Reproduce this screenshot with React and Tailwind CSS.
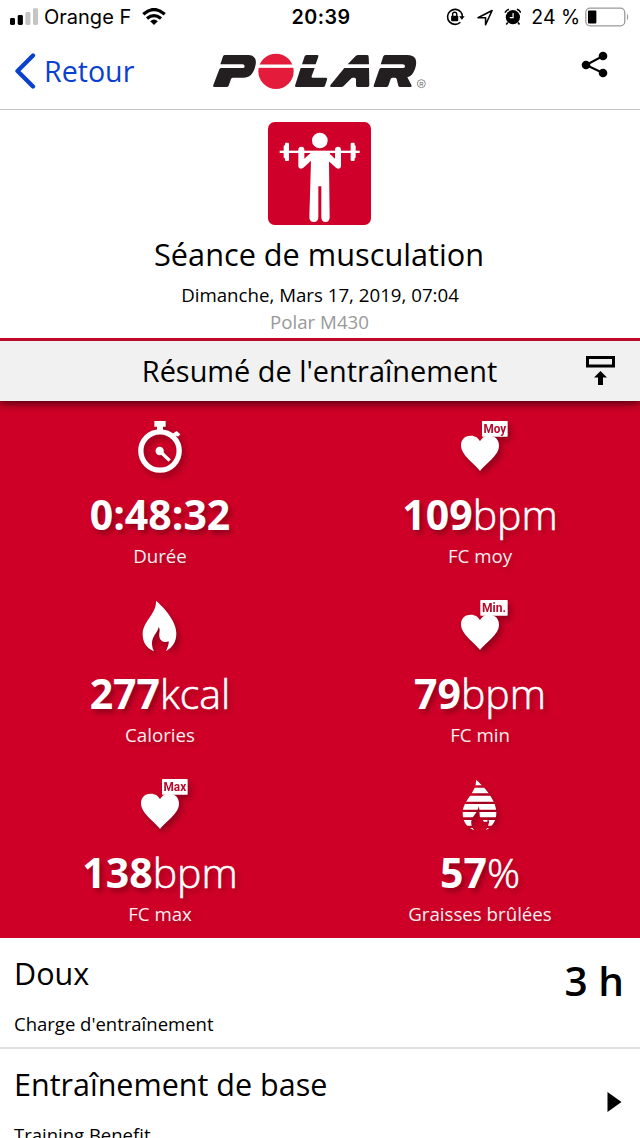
import React from "react";

function StatusBar() {
  return (
    <div className="flex h-[34px] items-center pl-[10px] pr-[10px] font-['Inter','Liberation_Sans',sans-serif] text-[19.7px] leading-[34px] text-black">
      <div className="flex w-[279px] shrink-0 items-center">
        <svg width="28" height="18" viewBox="0 0 28 18">
          <rect x="0" y="10" width="5" height="7" rx="1.4" />
          <rect x="7.7" y="7" width="5.2" height="10" rx="1.4" />
          <rect x="15.4" y="4" width="5" height="13" rx="1.4" fill="#c4c4c4" />
          <rect x="23" y="0.3" width="5" height="16.7" rx="1.4" fill="#c4c4c4" />
        </svg>
        <span className="ml-[6px] w-[98px] whitespace-nowrap text-[20px]">Orange F</span>
        <svg width="24" height="18" viewBox="0 0 24 18" fill="none" stroke="#000" strokeWidth="3.2">
          <path d="M1.3 6.2Q12-3.2 22.7 6.2" />
          <path d="M5 10.5Q12 4.7 19 10.5" />
          <path d="M8.2 13.2Q12 10 15.8 13.2L12 17Z" fill="#000" stroke="none" />
        </svg>
      </div>
      <span className="w-[64px] shrink-0 text-center text-[19.7px] font-semibold tracking-[0.5px]">20:39</span>
      <div className="ml-auto flex w-[184px] items-center">
        <svg width="19" height="18" viewBox="0 0 19 18" fill="none" stroke="#000" strokeWidth="1.6">
          <path d="M15.2 4.2A7.6 7.6 0 1 0 14.5 14.3" />
          <path d="M15.2 4.2Q16.8 6.2 16.6 9" />
          <path d="M13.3 8.2h5.6l-2.8 3.5z" fill="#000" stroke="none" />
          <rect x="5.2" y="7.8" width="7.2" height="5.4" rx=".8" fill="#000" stroke="none" />
          <path d="M6.7 8V6.3a2.1 2.1 0 0 1 4.2 0V8" strokeWidth="1.4" />
        </svg>
        <svg className="ml-[12px]" width="17" height="17" viewBox="0 0 17 17" fill="none" stroke="#000" strokeWidth="1.6" strokeLinejoin="round">
          <path d="M1 8.7 15.3 1.4 8.7 15.8V8.7Z" />
        </svg>
        <svg className="ml-[10px]" width="18" height="18" viewBox="0 0 18 18" fill="none" stroke="#000">
          <circle cx="9" cy="9.2" r="7.2" fill="#000" stroke="none" />
          <path d="M1 4.6Q2.3 2 5 1.2M17 4.6Q15.7 2 13 1.2M3.8 14.5 2.3 16.5M14.2 14.5 15.7 16.5" strokeWidth="1.6" />
          <path d="M9.2 5V9.7H5.8" stroke="#fff" strokeWidth="1.2" />
        </svg>
        <span className="ml-[10px] w-[54px] whitespace-nowrap text-[19.5px]">24 %</span>
        <svg width="46" height="20" viewBox="0 0 46 20">
          <rect x=".8" y="1" width="39.5" height="18" rx="4.5" fill="none" stroke="#999" strokeWidth="1.3" />
          <rect x="3" y="3.5" width="8.5" height="13" rx="1" />
          <path d="M42.5 6.5Q45 10 42.5 13.5Z" fill="#999" />
        </svg>
      </div>
    </div>
  );
}

function PolarLogo() {
  return (
    <svg width="240" height="60" viewBox="0 0 720 180" fill="#231f20">
      <path d="M61 73 69 49Q71 45 75 45H145C165 45 171 61 166 78C160 103 148 113 130 113H99Q95 113 93 117L86 137Q84 141 80 141H43Q38 141 40 135L58 88Q60 84 64 84H127Q134 84 134 78.5Q134 73 127 73Z" />
      <circle cx="228" cy="94" r="53" fill="#e51b3b" />
      <rect x="172" y="73.5" width="112" height="10" fill="#fff" />
      <path d="M306 73 314 49Q316 45 321 45H352Q357 45 355 50L347 73ZM302 84H344L335 108Q333 113 338 113H378Q383 113 381 119L375 137Q373 141 369 141H290Q283 141 286 134Z" />
      <path d="M443 73 467 48Q470 45 475 45H502Q506 45 506 50L507 73ZM433 84H507L508 136Q508 141 503 141H472Q468 141 468 136V118Q468 113 463 113H459Q455 113 452 117L431 138Q428 141 424 141H395Q388 141 392 134Z" />
      <path d="M542 73 550 49Q552 45 557 45H621C647 45 653 61 646 84C640 102 633 108 622 112L634 135Q637 141 630 141H600Q596 141 595 137L590 117Q589 113 584 113H578Q574 113 572 117L565 137Q563 141 559 141H525Q519 141 522 134L538 88Q540 84 544 84H608Q615 84 615 78.5Q615 73 608 73Z" />
      <circle cx="664" cy="131" r="12" fill="none" stroke="#555" strokeWidth="2" />
      <text x="664" y="138" textAnchor="middle" fontSize="18" fontFamily="Liberation Sans, sans-serif" fill="#555">R</text>
    </svg>
  );
}

function Header() {
  return (
    <div className="flex h-[76px] items-start border-b border-[#c4c4c4] pl-[15px] pr-[32px]">
      <div className="flex w-[185px] shrink-0 items-center pt-[18px] text-[#0a40d0]">
        <svg width="21" height="38" viewBox="0 0 21 38" fill="none" stroke="currentColor" strokeWidth="4.3" strokeLinecap="round" strokeLinejoin="round">
          <path d="M18 3.5 2.500 19 18 34.500" />
        </svg>
        <span className="ml-[8px] text-[28.6px] leading-[36px]">Retour</span>
      </div>
      <div className="mt-[6px] shrink-0"><PolarLogo /></div>
      <svg className="ml-auto mt-[17px]" width="27" height="28" viewBox="0 0 27 28">
        <path d="M22 5 5 14l17 8" fill="none" stroke="#000" strokeWidth="2" />
        <circle cx="22" cy="5" r="4.3" /><circle cx="5" cy="14" r="4.3" /><circle cx="22" cy="22" r="4.3" />
      </svg>
    </div>
  );
}

function StrengthIcon() {
  return (
    <svg className="mr-[2px]" width="103" height="103" viewBox="54 36 309 309">
      <rect x="54" y="36" width="309" height="309" rx="20" fill="#cf0029" />
      <g fill="#fff">
        <circle cx="209.5" cy="91.5" r="23.5" />
        <rect x="89" y="122" width="240" height="7" />
        <rect x="105" y="98" width="12" height="55" rx="3" />
        <rect x="101" y="106" width="8" height="39" rx="3" />
        <rect x="302" y="98" width="12" height="55" rx="3" />
        <rect x="309" y="106" width="8" height="39" rx="3" />
        <path d="M180 125H240L237 160 239 322Q239 336 226.5 336Q214 336 214 322V229H205V322Q205 336 191.5 336Q178 336 178 322L183 150Z" />
      </g>
      <path d="M154 119V167L182 141M264 119V167L236 141" fill="none" stroke="#fff" strokeWidth="18" strokeLinecap="round" strokeLinejoin="round" />
    </svg>
  );
}

const iconShadow = "mx-auto block [filter:drop-shadow(3px_4px_3px_rgba(0,0,0,.3))]";

function Stopwatch() {
  return (
    <svg className={iconShadow} width="60" height="56" viewBox="150 51 180 168" overflow="visible">
      <circle cx="240" cy="153" r="57.5" fill="none" stroke="#fff" strokeWidth="16" />
      <path d="M223 63H257V80H249V92H231V80H223ZM290 93 301 103 294 110 290 107 284 113 275 104 281 99Z" fill="#fff" />
      <circle cx="239" cy="153" r="12.5" fill="#fff" />
      <path d="M239 153 269 182" stroke="#fff" strokeWidth="10" />
    </svg>
  );
}

function Heart({ label }) {
  return (
    <svg className={iconShadow} width="60" height="56" viewBox="150 51 180 168" overflow="visible">
      <path d="M240 213C224 191 183 167 183 136C183 116 197 107 212 107C226 107 236 114 240 124C244 114 254 107 268 107C284 107 297 117 297 137C297 167 256 191 240 213Z" fill="#fff" />
      <rect x={label === "Min." ? 241 : 246} y="63" width={label === "Min." ? 82 : 77} height="47" rx="2" fill="#fff" />
      <text x={label === "Min." ? 282 : 284.5} y="100" textAnchor="middle" textLength={label === "Min." ? 72 : 68} lengthAdjust="spacingAndGlyphs" fontSize="41" fontWeight="700" fontFamily="Roboto, sans-serif" fill="#b80a2b">{label}</text>
    </svg>
  );
}

function Flame() {
  return (
    <svg className={iconShadow} width="60" height="56" viewBox="150 48 180 168" overflow="visible">
      <path d="M228 62C249 80 289 121 289 160C289 187 278 201 258 214C263 201 267 193 266 184C255 190 239 184 238 168C237 157 242 150 236 141C233 158 216 168 216 190C216 201 219 208 222 214C200 205 188 188 188 162C188 124 231 100 228 62Z" fill="#fff" />
    </svg>
  );
}

function FatFlame() {
  return (
    <svg className={iconShadow} width="60" height="56" viewBox="150 45 180 168" overflow="visible">
      <defs>
        <clipPath id="bands">
          <rect x="180" y="50" width="120" height="26" />
          <rect x="180" y="83" width="120" height="17" />
          <rect x="180" y="107" width="120" height="18" />
          <rect x="180" y="132" width="120" height="17" />
          <rect x="180" y="156" width="120" height="16" />
          <rect x="180" y="180" width="120" height="17" />
          <rect x="180" y="204" width="120" height="7" />
        </clipPath>
      </defs>
      <g clipPath="url(#bands)" fill="#fff">
        <path d="M228 59C249 77 289 118 289 157C289 184 278 198 258 211C263 199 268 192 267 181C250 181 240 182 239 165C238 156 239 148 236 138C234 154 225 162 217 174C211 185 213 199 223 211C200 202 188 185 188 159C188 121 231 97 228 59Z" />
        <path d="M248 180H262V185H252Z" />
      </g>
    </svg>
  );
}

function Metric({ icon, value, unit, label }) {
  return (
    <div className="h-[179px] pt-[16px] text-center text-white">
      {icon}
      <div className="mt-[11px] h-[60px] whitespace-nowrap text-[41px] leading-[60px] [text-shadow:3px_4px_5px_rgba(0,0,0,.3)]">
        <span className="font-bold">{value}</span><span className="font-light [-webkit-text-stroke:0.6px_white]">{unit}</span>
      </div>
      <div className="h-[24px] text-[18.7px] leading-[24px] text-[#ffeef0] [text-shadow:2px_3px_4px_rgba(0,0,0,.2)]">{label}</div>
    </div>
  );
}

export default function App() {
  return (
    <div className="h-[1138px] w-[640px] overflow-hidden bg-white font-['Open_Sans','Noto_Sans',sans-serif] text-black">
      <StatusBar />
      <Header />
      <section className="flex h-[228px] flex-col items-center pt-[12px]">
        <StrengthIcon />
        <h1 className="mr-[2px] mt-[8px] text-[30.7px] leading-[42px]">Séance de musculation</h1>
        <p className="mt-[7px] text-[18.7px] leading-[26px]">Dimanche, Mars 17, 2019, 07:04</p>
        <p className="mr-[1px] mt-[1px] text-[18.7px] leading-[26px] text-[#999]">Polar M430</p>
      </section>
      <div className="relative flex h-[63px] items-center justify-center border-t-[3px] border-[#bd0a2b] bg-[#f1f1f1] shadow-[0_3px_8px_rgba(0,0,0,.6)] [clip-path:inset(0_0_-20px_0)]">
        <h2 className="mr-[1px] text-[28.9px] leading-[42px]">Résumé de l'entraînement</h2>
        <svg className="absolute right-[25px] top-[15px]" width="29" height="30" viewBox="0 0 29 30">
          <rect x="1.5" y="1.5" width="26" height="8.5" fill="none" stroke="#000" strokeWidth="3" />
          <path d="M14.5 15 21 21.5H17V29H12V21.5H8Z" />
        </svg>
      </div>
      <section className="grid h-[537px] grid-cols-2 bg-[#cf0027]">
        <Metric icon={<Stopwatch />} value="0:48:32" unit="" label="Durée" />
        <Metric icon={<Heart label="Moy" />} value="109" unit="bpm" label="FC moy" />
        <Metric icon={<Flame />} value="277" unit="kcal" label="Calories" />
        <Metric icon={<Heart label="Min." />} value="79" unit="bpm" label="FC min" />
        <Metric icon={<Heart label="Max" />} value="138" unit="bpm" label="FC max" />
        <Metric icon={<FatFlame />} value="57" unit="%" label="Graisses brûlées" />
      </section>
      <section className="flex h-[111px] justify-between border-b-2 border-[#e0e0e0] pl-[14px] pr-[16px]">
        <div>
          <div className="mt-[14px] text-[30.5px] leading-[42px]">Doux</div>
          <div className="mt-[17px] text-[18.5px] leading-[26px]">Charge d'entraînement</div>
        </div>
        <div className="mt-[13px] text-[40.5px] font-semibold leading-[60px]">3 h</div>
      </section>
      <section className="flex h-[111px] justify-between pl-[14px] pr-[18px]">
        <div>
          <div className="mt-[14px] text-[30.5px] leading-[42px]">Entraînement de base</div>
          <div className="mt-[17px] text-[18.5px] leading-[26px]">Training Benefit</div>
        </div>
        <svg className="mt-[42px]" width="15" height="22" viewBox="0 0 15 22"><path d="M.5 1 14.5 11 .5 21Z" /></svg>
      </section>
    </div>
  );
}
